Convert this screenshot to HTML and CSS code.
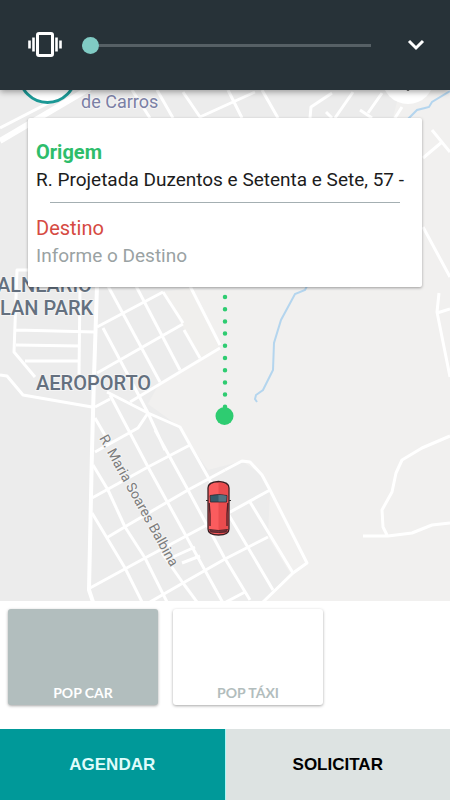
FILE: index.html
```html
<!DOCTYPE html>
<html lang="pt-BR">
<head>
<meta charset="utf-8">
<meta name="viewport" content="width=device-width, initial-scale=1">
<title>Pop Car</title>
<link rel="stylesheet" href="styles.css">
</head>
<body>
<header class="volume">
  <svg class="volume-icon" viewBox="0 0 36 28" aria-hidden="true">
    <rect x="10.500" y="2.500" width="15" height="22" rx="1.500" fill="none" stroke="#fff" stroke-width="3"/>
    <path d="M6.500 6.500v14M29.500 6.500v14" stroke="#fff" stroke-width="2.600"/>
    <path d="M2.500 9.500v8M33.500 9.500v8" stroke="#fff" stroke-width="2.600"/>
  </svg>
  <input class="volume-range" type="range" min="0" max="100" value="0" aria-label="Volume">
  <button class="volume-more" type="button" aria-label="Expandir">
    <svg viewBox="0 0 18 12" aria-hidden="true"><path d="M2 2l7 7 7-7" fill="none" stroke="#fff" stroke-width="3"/></svg>
  </button>
</header>

<main class="map">
  <svg class="map-canvas" viewBox="0 90 450 511" preserveAspectRatio="xMidYMid slice" aria-hidden="true">
    <rect y="90" width="450" height="511" fill="#f1f0ef"/>
    <path d="M0 90H400L350 290H190L220 346L160 382L148 404L180 427L192 447L208 470L242 461L262 475L270 490L268 537L290 573L263 601H0Z" fill="#ececec"/>
    <path d="M190 288L220 346L200 358L163 292Z" fill="#f0efed"/>
    <g fill="none" stroke="#fff" stroke-width="3" stroke-linejoin="round">
      <path d="M0 141L90 88" stroke-width="6"/>
      <path d="M0 128L60 97M132 90L150 118M157 90L173 118M183 92L200 117L255 92M228 90L242 118M262 90L278 118M332 93L311 107L310 118M353 92L335 118M326 112L332 118M382 93L368 113M360 110L372 118M402 107L395 118"/>
      <path d="M432 130L450 152M442 142L423 158M423 227L450 277M439 293L437 312L450 377M437 313L450 309"/>
      <path d="M97 286L94 377L92 450L89 590L93 602" stroke-width="4"/>
      <path d="M28 270H17L14 352L35 377M80 286L79 375M16 330L95 332M16 345L80 346M25 361H80M0 375L7 376L23 395L92 407"/>
      <path d="M108 286L160 382M136 286L180 370M163 292L183 323M184 330L200 358M190 286L220 345M220 348L130 402M183 324L97 373M163 292L97 327"/>
      <path d="M103 328L128 375L148 413L165 450M107 392L148 413L180 427L190 445L208 477L230 517L273 590M148 413L138 428L95 452M110 395L148 467L223 603M95 407L110 399M95 418L106 437M155 430L188 490L224 557L250 600"/>
      <path d="M93 465L108 490L125 527L145 558L167 602M92 513L125 568L142 602M162 553L183 583L197 602M190 445L148 467L92 498M225 470L188 490L128 525L108 537"/>
      <path d="M270 490L203 527L145 558L90 588M268 537L225 559L183 583L150 602M173 557L195 547M182 563L200 556M250 502L293 573M245 592L226 602"/>
      <path d="M225 470L242 461L250 462L262 475L270 490L307 563L293 573L263 602"/>
      <path d="M450 436L422 448L402 460L396 473L392 492L382 510L383 527L387 535M363 536H388L412 533L432 525L450 523"/>
    </g>
    <g fill="none" stroke="#b4d5ee" stroke-width="2">
      <path d="M450 91L432 102L429 107L425 108L417 110L408 119M307 286L305 290L295 294L281 320L274 343L273 370L263 390L256 395L255 399L257 402"/>
    </g>
    <g class="map-labels">
      <text x="81" y="108" class="map-place">de Carros</text>
      <text x="-3" y="292" class="map-district">ALNEÁRIO</text>
      <text x="0" y="315" class="map-district">LAN PARK</text>
      <text x="36" y="390" class="map-district">AEROPORTO</text>
      <text class="map-street" transform="translate(99 438) rotate(61)">R. Maria Soares Balbina</text>
    </g>
    <path d="M225 297V408" stroke="#2ecc71" stroke-width="4.500" stroke-linecap="round" stroke-dasharray="0 12.200"/>
    <circle cx="224.500" cy="416" r="9" fill="#2ecc71"/>
    <g>
      <path d="M206 500.500h4M227 500.500h4" stroke="#333" stroke-width="1.200"/>
      <path d="M208 488Q208 482 218.500 481.500Q229 482 229 488V529Q229 535 218.500 535Q208 535 208 529Z" fill="#fa5c5e" stroke="#3a2024" stroke-width="1.300"/>
      <path d="M218.500 482.500Q228 483 228 488V529Q228 534 218.500 534Z" fill="#ea4c4e"/>
      <path d="M210 495.500Q218.500 493.500 227 495.500L226.500 502H210.500Z" fill="#345968" stroke="#332a30" stroke-width=".8"/>
      <path d="M218.500 495Q223 494.500 226.500 496L226 501.500H218.500Z" fill="#527481"/>
      <path d="M209.200 503L210 514V526M227.800 503L227 514V526" fill="none" stroke="#512026" stroke-width="1.300"/>
      <path d="M209.500 529.500Q218.500 531.500 227.500 529.500L226 532Q218.500 533 211 532Z" fill="#783039" stroke="#3a2024" stroke-width=".8"/>
    </g>
  </svg>

  <button class="map-button map-button-menu" type="button" aria-label="Menu"></button>
  <button class="map-button map-button-locate" type="button" aria-label="Minha localização">
    <svg viewBox="0 0 24 24" aria-hidden="true"><circle cx="12" cy="12" r="6" fill="none" stroke="#444" stroke-width="2"/><path d="M12 1v5M12 18v5M1 12h5M18 12h5" stroke="#444" stroke-width="2"/></svg>
  </button>

  <form class="trip">
    <label class="trip-label trip-label-origin" for="origem">Origem</label>
    <input class="trip-input" id="origem" type="text" value="R. Projetada Duzentos e Setenta e Sete, 57 -">
    <hr class="trip-rule">
    <label class="trip-label trip-label-target" for="destino">Destino</label>
    <input class="trip-input" id="destino" type="text" placeholder="Informe o Destino">
  </form>
</main>

<section class="services" aria-label="Serviços">
  <button class="service service-selected" type="button">POP CAR</button>
  <button class="service" type="button">POP TÁXI</button>
</section>

<footer class="actions">
  <button class="action action-schedule" type="button">AGENDAR</button>
  <button class="action action-request" type="button">SOLICITAR</button>
</footer>
</body>
</html>
```
FILE: styles.css
```css
* {
  box-sizing: border-box;
}

body {
  margin: 0;
  min-height: 100vh;
  display: flex;
  flex-direction: column;
  background: #fff;
  font-family: Roboto, "Liberation Sans", sans-serif;
}

button {
  margin: 0;
  padding: 0;
  border: 0;
  background: none;
  font: inherit;
}

.volume {
  position: relative;
  z-index: 2;
  display: flex;
  align-items: center;
  height: 90px;
  padding: 0 25px 0 27px;
  background: #273238;
  box-shadow: 0 2px 6px rgba(0, 0, 0, 0.35);
}

.volume-icon {
  flex: none;
  width: 36px;
  height: 28px;
}

.volume-range {
  flex: 1;
  min-width: 0;
  height: 18px;
  margin: 0 36px 0 19px;
  appearance: none;
  background: linear-gradient(#566065, #566065) center / 100% 3px no-repeat;
}

.volume-range::-webkit-slider-thumb {
  appearance: none;
  width: 17px;
  height: 17px;
  border-radius: 50%;
  background: #80cbc4;
}

.volume-more {
  flex: none;
  width: 18px;
  height: 24px;
  display: grid;
  place-items: center;
}

.volume-more svg {
  width: 18px;
  height: 12px;
}

.map {
  position: relative;
  flex: 1;
  padding: 28px;
  overflow: hidden;
  background: #f1f0ef;
}

.map-canvas {
  position: absolute;
  inset: 0;
  width: 100%;
  height: 100%;
}

.map-labels {
  paint-order: stroke;
  stroke: #f4f4f4;
  stroke-width: 2px;
  stroke-linejoin: round;
}

.map-place {
  font-size: 18px;
  fill: #7b80a5;
}

.map-district {
  font-size: 20px;
  font-weight: 500;
  fill: #64707f;
}

.map-street {
  font-size: 14px;
  fill: #7c7c7c;
}

.map-button {
  position: absolute;
  display: grid;
  place-items: center;
  border-radius: 50%;
  background: #fff;
}

.map-button-menu {
  top: -45px;
  left: 18px;
  width: 59px;
  height: 59px;
  border: 3px solid #1b9895;
}

.map-button-locate {
  top: -38px;
  right: 16px;
  width: 52px;
  height: 52px;
}

.map-button-locate svg {
  width: 28px;
  height: 28px;
}

.trip {
  position: relative;
  display: flex;
  flex-direction: column;
  padding: 22px 8px 17px;
  border-radius: 2px;
  background: #fff;
  box-shadow: 0 1px 3px rgba(0, 0, 0, 0.35);
}

.trip-label {
  font-size: 20px;
  line-height: 24px;
}

.trip-label-origin {
  color: #2ebd6b;
  font-weight: 700;
}

.trip-label-target {
  color: #d64a42;
}

.trip-input {
  width: 100%;
  height: 30px;
  padding: 0;
  border: 0;
  background: none;
  color: #1c1c1c;
  font: 19px/24px Roboto, "Liberation Sans", sans-serif;
}

.trip-input::placeholder {
  color: #9aa2a3;
}

.trip-rule {
  align-self: stretch;
  height: 1px;
  margin: 8px 14px 13px;
  border: 0;
  background: #a4afb2;
}

.services {
  display: flex;
  gap: 15px;
  padding: 8px 8px 24px;
  background: #fff;
}

.service {
  display: flex;
  flex: 0 0 150px;
  align-items: flex-end;
  justify-content: center;
  height: 96px;
  padding-bottom: 4px;
  border-radius: 3px;
  background: #fff;
  box-shadow: 0 1px 3px rgba(0, 0, 0, 0.35);
  color: #b2bdbd;
  font: 700 14px/16px Lato, sans-serif;
}

.service-selected {
  background: #b2bebe;
  color: #fff;
}

.actions {
  display: flex;
  height: 71px;
}

.action {
  flex: 1;
  font: 700 17px "Liberation Sans", Arial, sans-serif;
}

.action-schedule {
  background: #009999;
  color: #dffcfb;
}

.action-request {
  border-left: 1px solid #a6f7f5;
  background: #dde3e2;
  color: #000;
}
```
